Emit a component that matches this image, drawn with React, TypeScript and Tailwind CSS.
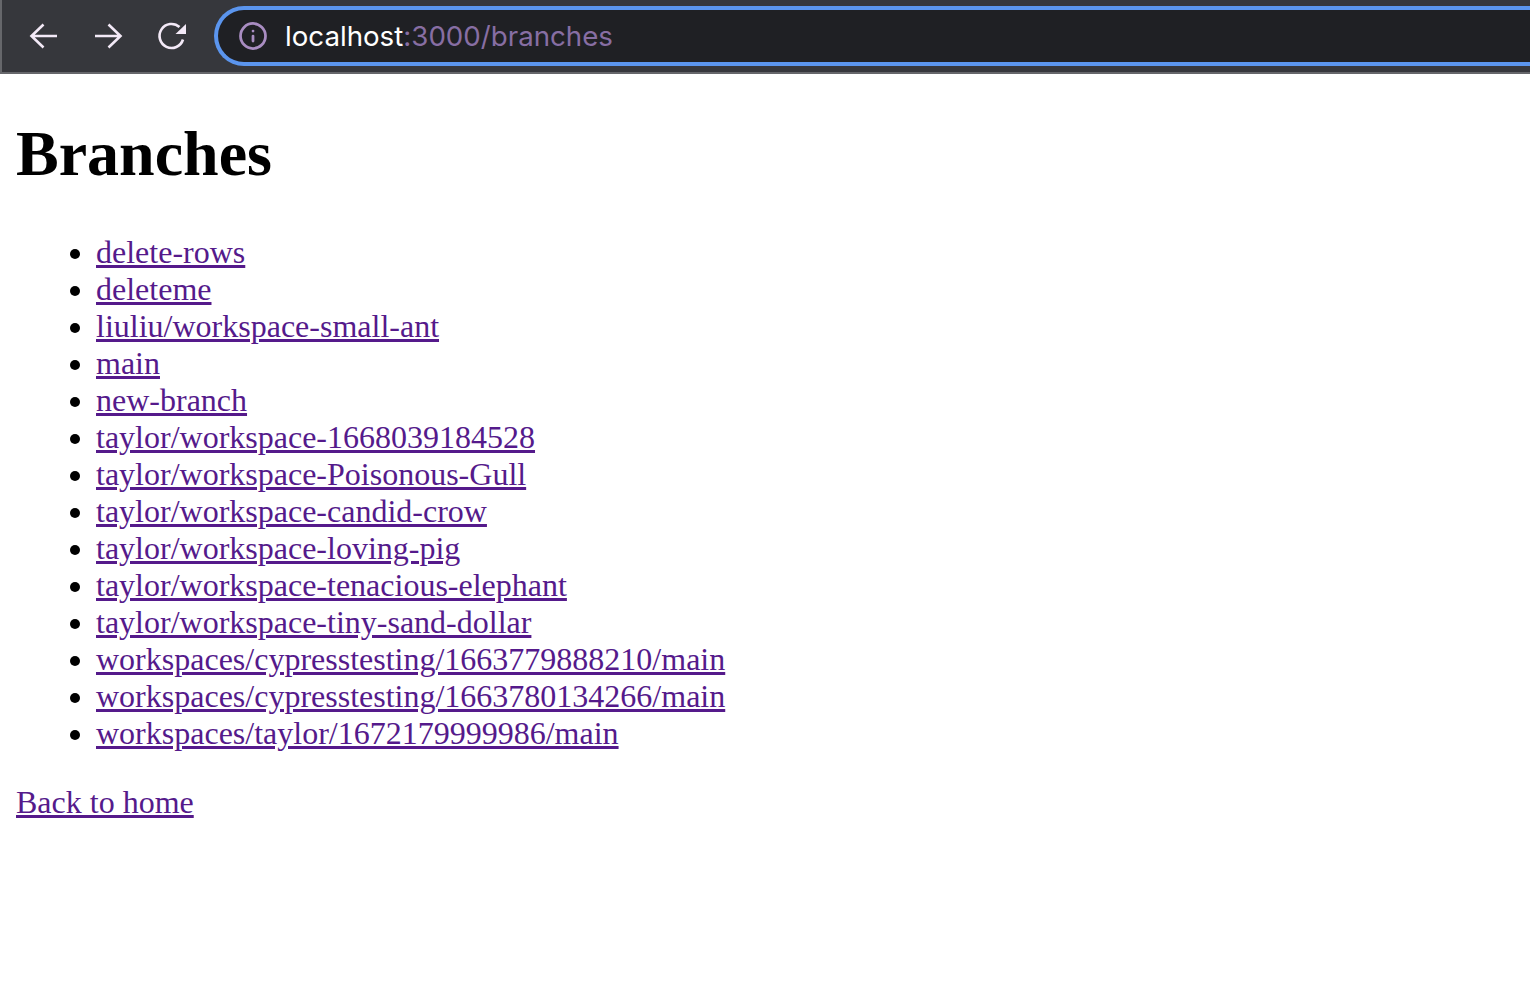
import { Info } from "lucide-react";

const branches = [
  "delete-rows",
  "deleteme",
  "liuliu/workspace-small-ant",
  "main",
  "new-branch",
  "taylor/workspace-1668039184528",
  "taylor/workspace-Poisonous-Gull",
  "taylor/workspace-candid-crow",
  "taylor/workspace-loving-pig",
  "taylor/workspace-tenacious-elephant",
  "taylor/workspace-tiny-sand-dollar",
  "workspaces/cypresstesting/1663779888210/main",
  "workspaces/cypresstesting/1663780134266/main",
  "workspaces/taylor/1672179999986/main",
];

function BackIcon() {
  return (
    <svg width="32" height="32" viewBox="0 0 32 32" fill="none" stroke="currentColor" strokeWidth="2.6">
      <path d="M3 16H29M15.5 4.5L3.5 16L15.5 27.5" />
    </svg>
  );
}

function ForwardIcon() {
  return (
    <svg width="32" height="32" viewBox="0 0 32 32" fill="none" stroke="currentColor" strokeWidth="2.6" className="ml-8">
      <path d="M3 16H29M16.5 4.5L28.5 16L16.5 27.5" />
    </svg>
  );
}

function ReloadIcon() {
  return (
    <svg width="32" height="32" viewBox="0 0 32 32" fill="none" className="ml-8">
      <path d="M27 19.5A12 12 0 1 1 23.5 7" stroke="currentColor" strokeWidth="2.6" />
      <path d="M30 4V14H19.5Z" fill="currentColor" />
    </svg>
  );
}

function Toolbar() {
  return (
    <header className="flex h-[74px] items-center border-b-2 border-l-2 border-b-[#66676b] border-l-[#66676b] bg-[#36373c]">
      <div className="flex w-[212px] shrink-0 items-center pl-[26px] text-[#f3e9f7]">
        <BackIcon />
        <ForwardIcon />
        <ReloadIcon />
      </div>
      <div className="flex h-[60px] flex-1 items-center rounded-l-full border-y-4 border-l-4 border-[#5b95ee] bg-[#1f2024] pl-[20px] font-['Inter',sans-serif] text-[27.7px]">
        <Info size={30} strokeWidth={2.2} className="text-[#a98dc2]" />
        <span className="ml-[17px] text-white">
          localhost<span className="text-[#876ea3]">:3000/branches</span>
        </span>
      </div>
    </header>
  );
}

export default function App() {
  return (
    <div className="min-h-[1006px] bg-white font-['Liberation_Serif',serif] text-[32px] leading-[37px] text-black">
      <Toolbar />
      <main className="px-4">
        <h1 className="my-[43px] text-[64px] leading-[74px] font-bold">Branches</h1>
        <ul className="my-[32px] list-disc pl-20">
          {branches.map((b) => (
            <li key={b}>
              <a href="#" className="text-[#551a8b] underline">
                {b}
              </a>
            </li>
          ))}
        </ul>
        <p className="mt-8">
          <a href="#" className="text-[#551a8b] underline">
            Back to home
          </a>
        </p>
      </main>
    </div>
  );
}
